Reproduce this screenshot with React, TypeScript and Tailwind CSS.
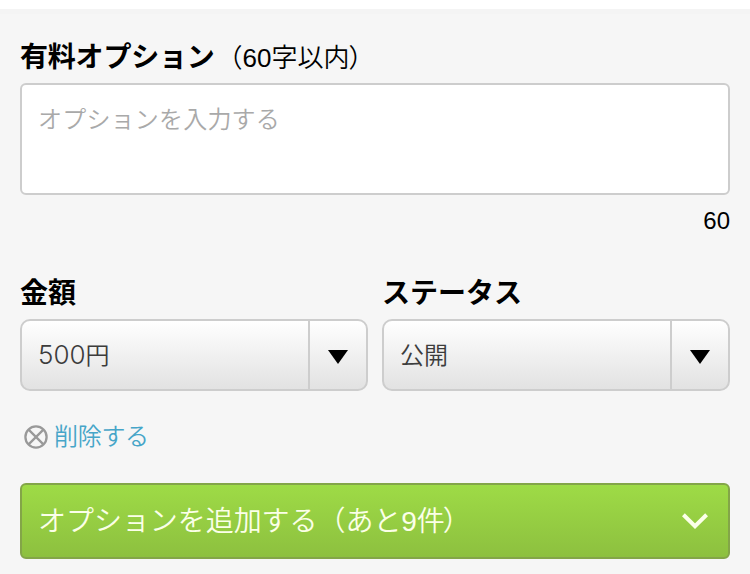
import type { ReactNode } from "react";

const selects = [
  { label: "金額", amount: "500", text: "円" },
  { label: "ステータス", amount: "", text: "公開" },
];

function Label({ children }: { children: ReactNode }) {
  return (
    <h2 className="h-9 whitespace-nowrap pt-px text-[28px] leading-9 font-bold text-black">
      {children}
    </h2>
  );
}

export default function App() {
  return (
    <div className="h-[574px] w-[750px] overflow-hidden border-t-[9px] border-white bg-[#f6f6f6] font-['Liberation_Sans','Noto_Sans_CJK_JP',sans-serif]">
      <form className="flex flex-col border-t-[5px] border-[#f4f4f4] px-5 pt-[25px]">
        <Label>
          <span className="tracking-[-0.2px]">有料オプション</span>
          <span className="ml-0.5 text-[26px] font-[350]">
            （60字以内<span className="-ml-px">）</span>
          </span>
        </Label>
        <div className="mt-2 h-28 rounded-md border-2 border-[#cdcdcd] bg-white px-4 pt-[17px] text-2xl leading-9 font-[350] tracking-[0.2px] text-[#a9a9a9]">
          オプションを入力する
        </div>
        <p className="mt-2 h-9 text-right text-2xl leading-9 text-black">60</p>

        <div className="mt-9 flex gap-3.5">
          {selects.map((item) => (
            <div key={item.label} className="flex-1">
              <Label>{item.label}</Label>
              <button
                type="button"
                className="mt-2 flex h-[72px] w-full rounded-[10px] border-2 border-[#cdcdcd] bg-linear-to-b from-white to-[#e2e2e2]"
              >
                <span className="flex h-full flex-1 items-center pt-0.5 pl-4 text-2xl font-[350] text-[#3c3c3c]">
                  {item.amount && (
                    <span className="mb-0.5 font-[Inter,sans-serif] text-[26px] font-light">
                      {item.amount}
                    </span>
                  )}
                  {item.text}
                </span>
                <span className="flex h-full w-[58px] items-center justify-center border-l-2 border-[#cdcdcd]">
                  <svg width="20" height="14" viewBox="0 0 20 14" className="mt-1">
                    <path d="M0 0h20L10 14z" fill="#000" />
                  </svg>
                </span>
              </button>
            </div>
          ))}
        </div>

        {/* Delete link */}
        <a className="mt-7 ml-1 flex h-9 items-center gap-1.5 text-2xl font-[350] tracking-[-0.3px] text-[#46a5c8]">
          <svg
            width="24"
            height="24"
            viewBox="0 0 24 24"
            fill="none"
            stroke="#999"
            strokeWidth="2.3"
          >
            <circle cx="12" cy="12" r="10.6" />
            <path d="M4.6 4.6l14.8 14.8M19.4 4.6L4.6 19.4" />
          </svg>
          削除する
        </a>

        {/* Add option */}
        <button
          type="button"
          className="mt-[28px] flex h-[76px] items-center justify-between rounded-md border-2 border-[#83a548] bg-linear-to-b from-[#9edb46] to-[#8dc03f] pr-5 pl-4 text-[28px] font-[350] text-[#fbffe8]"
        >
          <span className="pt-0.5 tracking-[-0.05px]">
            オプションを追加する（あと9件<span className="-ml-0.5">）</span>
          </span>
          <svg
            width="26"
            height="17"
            viewBox="0 0 26 17"
            fill="none"
            stroke="currentColor"
            strokeWidth="4"
          >
            <path d="M1.4 1.8L13 13.2L24.6 1.8" />
          </svg>
        </button>
      </form>
    </div>
  );
}
